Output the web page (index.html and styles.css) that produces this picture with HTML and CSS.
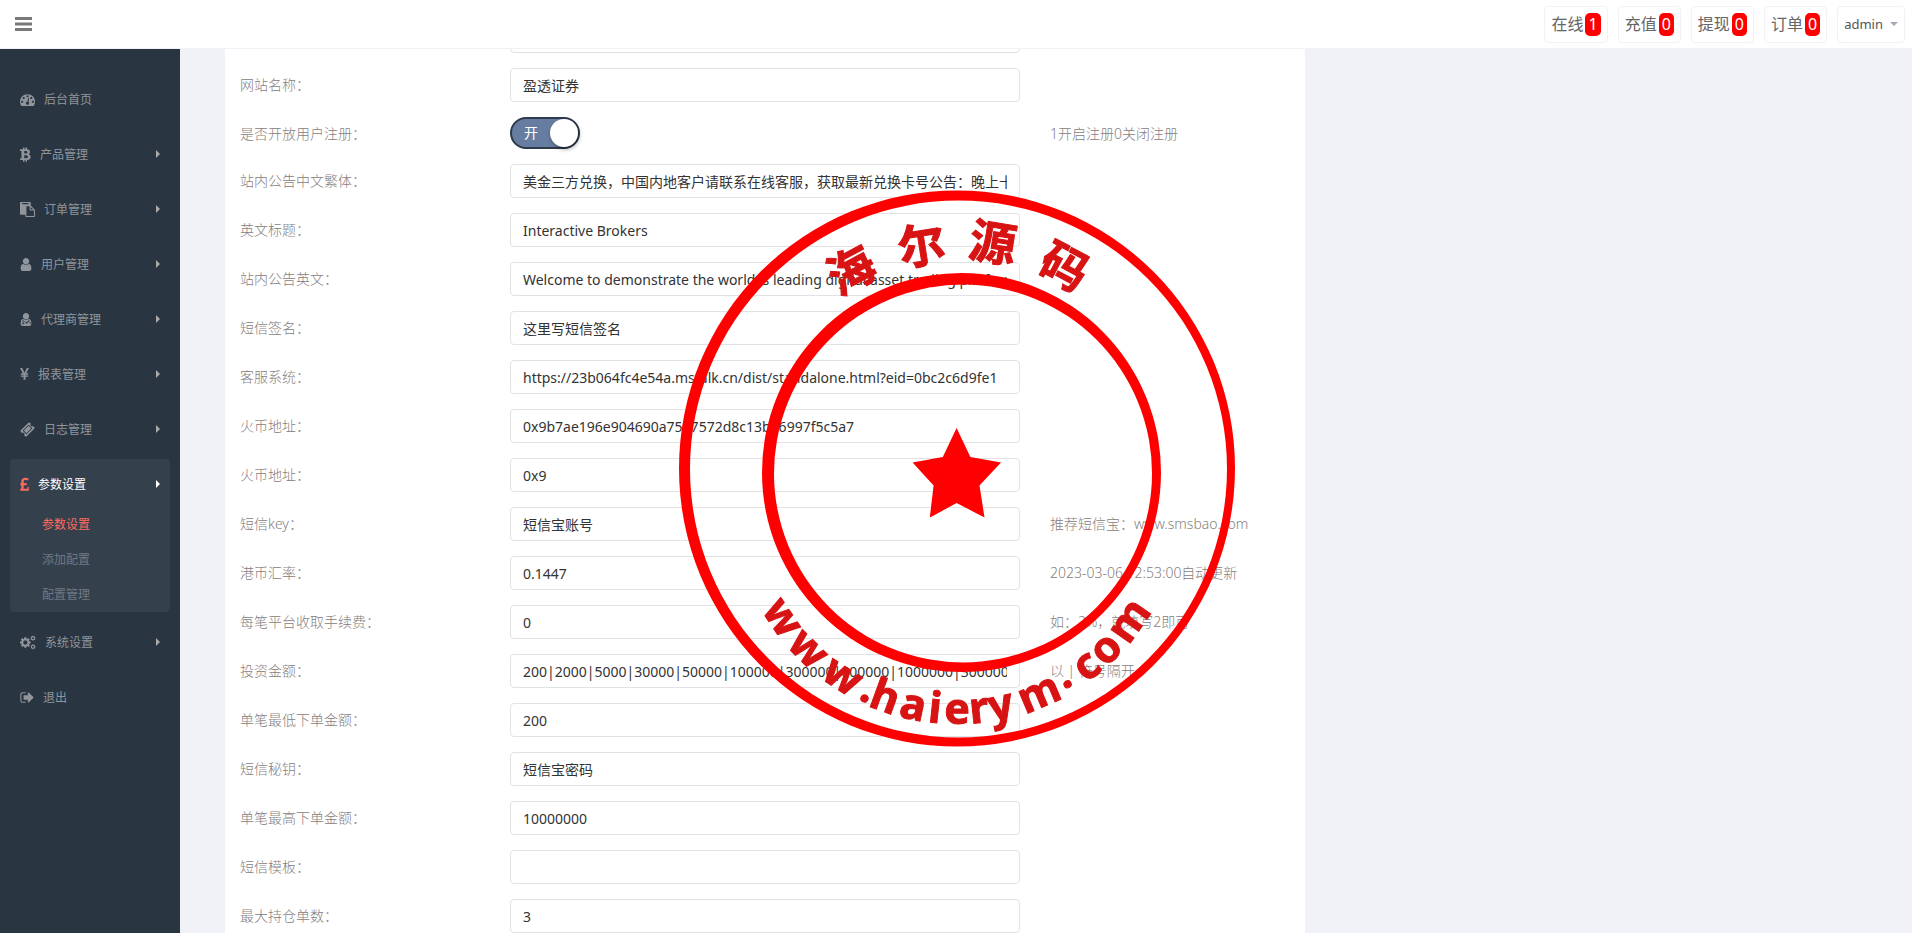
FILE: index.html
```
<!DOCTYPE html>
<html lang="zh-CN">
<head>
    <meta charset="UTF-8">
    <meta name="viewport" content="width=device-width, initial-scale=1.0">
    <title>参数设置</title>
    <link rel="stylesheet" href="styles.css">
</head>
<body>
    <header class="header">
        <button class="menu-toggle" type="button" aria-label="menu">
            <svg width="17" height="14" viewBox="0 0 17 14"><path d="M0 0h17v3H0zM0 5.500h17v3H0zM0 11h17v3H0z"/></svg>
        </button>
        <nav class="top-nav">
            <a class="top-link" href="#">在线<span class="badge">1</span></a>
            <a class="top-link" href="#">充值<span class="badge">0</span></a>
            <a class="top-link" href="#">提现<span class="badge">0</span></a>
            <a class="top-link" href="#">订单<span class="badge">0</span></a>
            <button class="top-link user" type="button">admin<span class="caret"></span></button>
        </nav>
    </header>

    <div class="wrapper">
        <aside class="sidebar">
            <ul class="menu">
                <li><a class="menu-link" href="#">
                    <svg width="15" height="15" viewBox="0 0 1792 1792"><path d="M384 1152q0-53-37.500-90.500t-90.500-37.500-90.500 37.500-37.500 90.500 37.500 90.500 90.500 37.500 90.500-37.500 37.500-90.500zm192-448q0-53-37.500-90.500t-90.500-37.500-90.500 37.500-37.500 90.500 37.500 90.500 90.500 37.500 90.500-37.500 37.500-90.500zm428 481l101-382q6-26-7.500-48.500t-38.500-29.500-48 6.500-30 39.500l-101 382q-60 5-107 43.500t-63 98.500q-20 77 20 146t117 89 146-20 89-117q16-60-6-117t-72-91zm660-33q0-53-37.500-90.500t-90.500-37.500-90.500 37.500-37.500 90.500 37.500 90.500 90.500 37.500 90.500-37.500 37.500-90.500zm-640-640q0-53-37.500-90.500t-90.500-37.500-90.500 37.500-37.500 90.500 37.500 90.500 90.500 37.500 90.500-37.500 37.500-90.500zm448 192q0-53-37.500-90.500t-90.500-37.500-90.500 37.500-37.500 90.500 37.500 90.500 90.500 37.500 90.500-37.500 37.500-90.500zm320 448q0 261-141 483-19 29-54 29h-1402q-35 0-54-29-141-221-141-483 0-182 71-348t191-286 286-191 348-71 348 71 286 191 191 286 71 348z"/></svg>
                    <span>后台首页</span>
                </a></li>
                <li><a class="menu-link has-sub" href="#">
                    <svg width="11" height="15" viewBox="0 0 11 15"><path fill-rule="evenodd" d="M0 2.200h3V.5h1.500v1.700h1V.5H7v1.800c2 .3 3 1.200 3 2.700 0 1.100-.6 1.900-1.600 2.300 1.400.4 2.200 1.300 2.200 2.700 0 1.900-1.300 2.800-3.600 3v1.700H5.500V13h-1v1.700H3V13H0l.3-1.700h1.200V4H0zM4.200 4v2.600h1.300c1.300 0 2-.4 2-1.300S6.800 4 5.500 4zM4.200 8.200v3h1.600c1.400 0 2.200-.5 2.200-1.500s-.8-1.500-2.200-1.500z"/></svg>
                    <span>产品管理</span>
                </a></li>
                <li><a class="menu-link has-sub" href="#">
                    <svg width="15" height="15" viewBox="0 0 1792 1792"><path d="M768 1664h896v-640h-416q-40 0-68-28t-28-68v-416h-384v1152zm256-1440v-64q0-13-9.500-22.500t-22.500-9.500h-704q-13 0-22.500 9.500t-9.500 22.500v64q0 13 9.500 22.500t22.500 9.500h704q13 0 22.500-9.500t9.500-22.500zm256 672h299l-299-299v299zm512 128v672q0 40-28 68t-68 28h-960q-40 0-68-28t-28-68v-160h-544q-40 0-68-28t-28-68v-1344q0-40 28-68t68-28h1088q40 0 68 28t28 68v328q21 13 36 28l408 408q28 28 48 76t20 88z"/></svg>
                    <span>订单管理</span>
                </a></li>
                <li><a class="menu-link has-sub" href="#">
                    <svg width="12" height="15" viewBox="240 0 1312 1792"><path d="M1536 1399q0 109-62.500 187t-150.500 78h-854q-88 0-150.500-78t-62.500-187q0-85 8.500-160.500t31.500-152 58.500-131 94-89 134.500-34.500q131 128 313 128t313-128q76 0 134.500 34.500t94 89 58.500 131 31.500 152 8.500 160.500zm-256-887q0 159-112.500 271.500t-271.500 112.500-271.500-112.500-112.500-271.500 112.500-271.500 271.500-112.500 271.500 112.500 112.500 271.500z"/></svg>
                    <span>用户管理</span>
                </a></li>
                <li><a class="menu-link has-sub" href="#">
                    <svg width="12" height="15" viewBox="240 0 1312 1792"><path d="M1536 1399q0 109-62.500 187t-150.500 78h-854q-88 0-150.500-78t-62.500-187q0-85 8.500-160.500t31.500-152 58.500-131 94-89 134.500-34.500q131 128 313 128t313-128q76 0 134.500 34.500t94 89 58.500 131 31.500 152 8.500 160.500zm-256-887q0 159-112.500 271.500t-271.500 112.500-271.500-112.500-112.500-271.500 112.500-271.500 271.500-112.500 271.500 112.500 112.500 271.500z"/><path class="scope" d="M560 960v330M1220 960v180M1000 1440v-120q0-150 220-180 200 30 200 180v90M720 1120l176 200 176-200"/><circle class="scope" cx="560" cy="1370" r="80"/></svg>
                    <span>代理商管理</span>
                </a></li>
                <li><a class="menu-link has-sub" href="#">
                    <svg width="9" height="15" viewBox="360 0 1075 1792"><path d="M985 1536h-172q-13 0-22-9t-10-23v-330h-288q-13 0-22-9t-10-23v-103q0-13 10-22t22-10h288v-85h-288q-13 0-22-9t-10-23v-104q0-13 10-22t22-10h214l-321-578q-8-16 0-32 10-16 28-16h194q19 0 29 18l215 425q19 38 56 125 10-24 30-68t28-61l191-420q8-19 29-19h191q17 0 27 16 9 14 1 31l-313 579h215q13 0 22 10t10 22v104q0 14-10 23t-22 9h-290v85h290q13 0 22 10t10 22v103q0 14-10 23t-22 9h-290v330q0 13-10 22t-22 10z"/></svg>
                    <span>报表管理</span>
                </a></li>
                <li><a class="menu-link has-sub" href="#">
                    <svg width="15" height="15" viewBox="0 0 1792 1792"><path d="M1024 452l316 316-572 572-316-316zm-211 979l618-618q19-19 19-45t-19-45l-362-362q-18-18-45-18t-45 18l-618 618q-19 19-19 45t19 45l362 362q18 18 45 18t45-18zm889-637l-907 908q-37 37-90.500 37t-90.500-37l-126-126q56-56 56-136t-56-136-136-56-136 56l-125-126q-37-37-37-90.500t37-90.500l907-906q37-37 90.500-37t90.500 37l125 125q-56 56-56 136t56 136 136 56 136-56l126 125q37 37 37 90.500t-37 90.500z"/></svg>
                    <span>日志管理</span>
                </a></li>
                <li class="active">
                    <a class="menu-link has-sub" href="#">
                        <svg width="9" height="15" viewBox="430 60 965 1608"><path d="M1371 1118v382q0 14-9 23t-23 9h-851q-13 0-22-9t-10-23v-150q0-13 10-22t22-10h83v-381h-81q-14 0-23-9t-9-23v-131q0-14 9-23t23-9h81v-222q0-171 123-282t315-111q185 0 335 125 9 8 10 20t-7 23l-103 127q-9 11-22 12-13 2-23-7-5-5-26-19t-69-32-93-18q-85 0-137 47t-52 123v215h305q13 0 22 9t10 23v131q0 13-10 22t-22 10h-305v379h414v-181q0-13 9-22t23-10h162q14 0 23 10t9 22z"/></svg>
                        <span>参数设置</span>
                    </a>
                    <ul class="sub-menu">
                        <li><a class="current" href="#">参数设置</a></li>
                        <li><a href="#">添加配置</a></li>
                        <li><a href="#">配置管理</a></li>
                    </ul>
                </li>
                <li><a class="menu-link has-sub" href="#">
                    <svg width="16" height="15" viewBox="0 0 1912 1792"><path d="M896 896q0-106-75-181t-181-75-181 75-75 181 75 181 181 75 181-75 75-181zm384-91v185q0 10-7 19t-16 11l-155 24q-11 35-32 76 34 48 90 115 7 11 7 20 0 12-7 19-23 30-82 89t-79 60q-11 0-21-7l-115-90q-37 19-77 31-11 108-23 155-7 24-30 24h-186q-11 0-20-7t-10-18l-23-153q-34-10-75-31l-118 89q-7 7-20 7-11 0-21-8-144-133-144-160 0-9 7-19 10-14 41-53t47-61q-23-44-35-82l-152-24q-10-1-17-9t-7-20v-185q0-10 7-19t16-11l155-24q11-35 32-76-34-48-90-115-7-11-7-20 0-12 7-20 22-30 82-89t79-59q11 0 21 7l115 90q34-18 77-32 11-108 23-154 7-24 30-24h186q11 0 20 7t10 18l23 153q34 10 75 31l118-89q8-7 20-7 11 0 21 8 144 133 144 160 0 8-7 19-12 16-42 54t-45 60q23 48 34 82l152 23q10 2 17 10t7 20z"/><g class="small-cog"><circle cx="1560" cy="384" r="190"/><circle cx="1560" cy="1408" r="190"/><path d="M1560 80v110M1560 578v110M1300 234l94 54M1726 480l94 54M1300 534l94-54M1726 288l94-54M1560 1104v110M1560 1602v110M1300 1258l94 54M1726 1504l94 54M1300 1558l94-54M1726 1312l94-54"/></g></svg>
                    <span>系统设置</span>
                </a></li>
                <li><a class="menu-link" href="#">
                    <svg width="14" height="15" viewBox="30 0 1660 1792"><path d="M704 1440q0 4 1 20t0 26-3 24-10 19-20 7h-320q-119 0-203-85t-85-203v-704q0-119 85-203t203-85h320q13 0 22 10t10 22q0 4 1 20t0 26-3 24-10 19-20 7h-320q-66 0-113 47t-47 113v704q0 66 47 113t113 47h312l12 1 11 3 8 5 7 9 2 14zm928-544q0 26-19 45l-544 544q-19 19-45 19t-45-19-19-45v-288h-448q-26 0-45-19t-19-45v-384q0-26 19-45t45-19h448v-288q0-26 19-45t45-19 45 19l544 544q19 19 19 45z"/></svg>
                    <span>退出</span>
                </a></li>
            </ul>
        </aside>

        <main class="content">
            <form class="panel">
                <div class="form-row">
                    <label for="logo"></label>
                    <div class="field"><input class="text" id="logo" type="text"></div>
                </div>
                <div class="form-row">
                    <label for="site-name">网站名称：</label>
                    <div class="field"><input class="text" id="site-name" type="text" value="盈透证券"></div>
                </div>
                <div class="form-row">
                    <label for="reg-open">是否开放用户注册：</label>
                    <div class="field">
                        <label class="switch">
                            <input id="reg-open" type="checkbox" checked>
                            <span class="switch-text">开</span>
                        </label>
                    </div>
                    <p class="help">1开启注册0关闭注册</p>
                </div>
                <div class="form-row">
                    <label for="notice-zh">站内公告中文繁体：</label>
                    <div class="field"><input class="text" id="notice-zh" type="text" value="美金三方兑换，中国内地客户请联系在线客服，获取最新兑换卡号公告：晚上十点"></div>
                </div>
                <div class="form-row">
                    <label for="title-en">英文标题：</label>
                    <div class="field"><input class="text" id="title-en" type="text" value="Interactive Brokers"></div>
                </div>
                <div class="form-row">
                    <label for="notice-en">站内公告英文：</label>
                    <div class="field"><input class="text" id="notice-en" type="text" value="Welcome to demonstrate the world is leading digital asset trading platform"></div>
                </div>
                <div class="form-row">
                    <label for="sms-sign">短信签名：</label>
                    <div class="field"><input class="text" id="sms-sign" type="text" value="这里写短信签名"></div>
                </div>
                <div class="form-row">
                    <label for="service">客服系统：</label>
                    <div class="field"><input class="text" id="service" type="text" value="https://23b064fc4e54a.mstalk.cn/dist/standalone.html?eid=0bc2c6d9fe1"></div>
                </div>
                <div class="form-row">
                    <label for="huobi-1">火币地址：</label>
                    <div class="field"><input class="text" id="huobi-1" type="text" value="0x9b7ae196e904690a7507572d8c13b46997f5c5a7"></div>
                </div>
                <div class="form-row">
                    <label for="huobi-2">火币地址：</label>
                    <div class="field"><input class="text" id="huobi-2" type="text" value="0x9"></div>
                </div>
                <div class="form-row">
                    <label for="sms-key">短信key：</label>
                    <div class="field"><input class="text" id="sms-key" type="text" value="短信宝账号"></div>
                    <p class="help">推荐短信宝：www.smsbao.com</p>
                </div>
                <div class="form-row">
                    <label for="hk-rate">港币汇率：</label>
                    <div class="field"><input class="text" id="hk-rate" type="text" value="0.1447"></div>
                    <p class="help">2023-03-06 12:53:00自动更新</p>
                </div>
                <div class="form-row">
                    <label for="fee">每笔平台收取手续费：</label>
                    <div class="field"><input class="text" id="fee" type="text" value="0"></div>
                    <p class="help">如：2%，就填写2即可</p>
                </div>
                <div class="form-row">
                    <label for="amounts">投资金额：</label>
                    <div class="field"><input class="text" id="amounts" type="text" value="200|2000|5000|30000|50000|100000|300000|600000|1000000|3000000|5000000"></div>
                    <p class="help">以 | 符号隔开</p>
                </div>
                <div class="form-row">
                    <label for="min-order">单笔最低下单金额：</label>
                    <div class="field"><input class="text" id="min-order" type="text" value="200"></div>
                </div>
                <div class="form-row">
                    <label for="sms-secret">短信秘钥：</label>
                    <div class="field"><input class="text" id="sms-secret" type="text" value="短信宝密码"></div>
                </div>
                <div class="form-row">
                    <label for="max-order">单笔最高下单金额：</label>
                    <div class="field"><input class="text" id="max-order" type="text" value="10000000"></div>
                </div>
                <div class="form-row">
                    <label for="sms-tpl">短信模板：</label>
                    <div class="field"><input class="text" id="sms-tpl" type="text"></div>
                </div>
                <div class="form-row">
                    <label for="max-hold">最大持仓单数：</label>
                    <div class="field"><input class="text" id="max-hold" type="text" value="3"></div>
                </div>
            </form>
        </main>
    </div>

    <svg class="seal" width="560" height="561" viewBox="0 0 560 561">
        <!-- rings -->
        <path fill-rule="evenodd" d="M3 282.500a278 278 0 1 0 556 0a278 278 0 1 0-556 0zM14 283a268.500 268.500 0 1 0 537 0a268.500 268.500 0 1 0-537 0z"/>
        <path fill-rule="evenodd" d="M86 286.500a199.500 199.500 0 1 0 399 0a199.500 199.500 0 1 0-399 0zM98 287.500a189 189 0 1 0 378 0a189 189 0 1 0-378 0z"/>
        <path d="M280.600 242L294.400 271L325 276.500L303.500 299.500L308.500 331.500L280.600 317L253.800 331.500L257.600 299.500L236.600 276.500L266.800 271z"/>
        <g class="seal-text seal-name">
            <text x="281" y="75" transform="rotate(-28 281 283)">海</text>
            <text x="281" y="74" transform="rotate(-9 281 283)">尔</text>
            <text x="281" y="71" transform="rotate(9 281 283)">源</text>
            <text x="281" y="71" transform="rotate(28 281 283)">码</text>
        </g>
        <g class="seal-text">
            <text x="281" y="538" transform="rotate(56 281 314)">w</text>
            <text x="281" y="538" transform="rotate(45 281 314)">w</text>
            <text x="281" y="538" transform="rotate(33 281 314)">w</text>
            <text x="281" y="536" transform="rotate(25 281 314)">.</text>
            <text x="281" y="538" transform="rotate(20 281 314)">h</text>
            <text x="281" y="538" transform="rotate(12 281 314)">a</text>
            <text x="281" y="538" transform="rotate(6 281 314)">i</text>
            <text x="281" y="538" transform="rotate(0 281 314)">e</text>
            <text x="281" y="538" transform="rotate(-6 281 314)">r</text>
            <text x="281" y="538" transform="rotate(-12 281 314)">y</text>
            <text x="281" y="538" transform="rotate(-23 281 314)">m</text>
            <text x="281" y="532" transform="rotate(-31 281 314)">.</text>
            <text x="281" y="538" transform="rotate(-38 281 314)">c</text>
            <text x="281" y="538" transform="rotate(-45 281 314)">o</text>
            <text x="281" y="538" transform="rotate(-55 281 314)">m</text>
        </g>
    </svg>
</body>
</html>
```
FILE: styles.css
```
* {
    box-sizing: border-box;
}

body {
    margin: 0;
    height: 100vh;
    overflow: hidden;
    background-color: #f1f2f7;
    font-family: "Noto Sans", "Noto Sans CJK SC", sans-serif;
    font-size: 14px;
    color: #797979;
}

ul {
    list-style: none;
    margin: 0;
    padding: 0;
}

a {
    text-decoration: none;
    color: inherit;
}

/* top bar */
.header {
    position: fixed;
    top: 0;
    left: 0;
    right: 0;
    z-index: 10;
    display: flex;
    justify-content: space-between;
    align-items: center;
    height: 49px;
    padding: 0 7px 0 15px;
    background-color: #fff;
    border-bottom: 1px solid #f1f2f7;
}

.menu-toggle {
    display: flex;
    padding: 0;
    border: none;
    background: none;
    cursor: pointer;
}

.menu-toggle svg {
    fill: #797979;
}

.top-nav {
    display: flex;
    gap: 10px;
}

.top-link {
    display: flex;
    align-items: center;
    gap: 2px;
    height: 37px;
    padding: 0 6px;
    border: 1px solid #f1f2f7;
    border-radius: 4px;
    background-color: #fff;
    font-family: inherit;
    font-size: 16px;
    line-height: 23px;
    color: #666;
}

.user {
    gap: 7px;
    font-size: 13px;
    color: #555;
    cursor: pointer;
}

.badge {
    padding: 0 3px;
    border-radius: 5px;
    background-color: #f00;
    color: #fff;
}

.caret {
    border: 4px solid transparent;
    border-top-color: #a4aaba;
    border-bottom: none;
}

/* sidebar */
.wrapper {
    display: flex;
    height: 100%;
}

.sidebar {
    flex: 0 0 180px;
    padding: 74px 10px 0;
    background-color: #2a3542;
}

.menu > li {
    margin-bottom: 5px;
    border-radius: 4px;
}

.menu-link {
    display: flex;
    align-items: center;
    gap: 9px;
    height: 50px;
    padding: 0 10px;
    font-size: 12px;
    color: #8f959b;
}

.menu-link svg {
    fill: currentColor;
}

.menu-link .scope {
    fill: none;
    stroke: #2a3542;
    stroke-width: 90;
}

.menu-link .small-cog {
    fill: none;
    stroke: currentColor;
    stroke-width: 130;
}

.has-sub::after {
    content: "";
    margin-left: auto;
    border: 4px solid transparent;
    border-left-color: #aaa;
    border-right: none;
}

.active {
    background-color: #35404d;
}

.active .menu-link {
    color: #fff;
}

.active .menu-link svg {
    fill: #ff6c60;
}

.active .has-sub::after {
    border-left-color: #fff;
}

.sub-menu {
    margin-top: -2px;
}

.sub-menu a {
    display: block;
    padding-left: 32px;
    font-size: 12px;
    line-height: 35px;
    color: #6f7982;
}

.sub-menu .current {
    color: #ff6c60;
}

/* settings form */
.content {
    flex: 1;
    padding: 0 67px 0 45px;
}

.panel {
    width: calc(100% * 2 / 3);
    min-width: 900px;
    min-height: 100%;
    padding-top: 19px;
    background-color: #fff;
}

.form-row {
    display: flex;
    margin-bottom: 15px;
}

.form-row > label,
.help {
    flex: 0 0 25%;
    margin: 0;
    padding: 0 15px;
    font-weight: 300;
    line-height: 34px;
    color: #868080;
    white-space: nowrap;
}

.form-row > label,
.help,
.switch {
    height: 32px;
}

.field {
    flex: 0 0 50%;
    padding: 0 15px;
}

.text {
    display: block;
    width: 100%;
    height: 34px;
    padding: 6px 12px;
    border: 1px solid #e2e2e4;
    border-radius: 4px;
    background-color: #fff;
    font-family: inherit;
    font-size: 14px;
    color: #333;
}

.switch {
    position: relative;
    display: block;
    width: 70px;
    cursor: pointer;
}

.switch input {
    appearance: none;
    display: block;
    width: 70px;
    height: 32px;
    margin: 0;
    border: 2px solid #2f3b4a;
    border-radius: 16px;
    background: #667da1;
}

.switch input::after {
    content: "";
    display: block;
    width: 28px;
    height: 28px;
    margin-left: auto;
    border-radius: 50%;
    background-color: #fff;
    box-shadow: 1px 2px 4px rgba(0, 0, 0, 0.4);
}

.switch-text {
    position: absolute;
    top: 0;
    left: 14px;
    line-height: 32px;
    color: #fff;
}

/* round stamp in the middle of the window */
.seal {
    position: fixed;
    inset: 0;
    z-index: 20;
    margin: auto;
    fill: #f00;
    pointer-events: none;
}

.seal-text {
    fill: #d81313;
    stroke: #d81313;
    stroke-width: 1;
    font-size: 43px;
    font-weight: bold;
    text-anchor: middle;
}

.seal-name {
    font-size: 47px;
}
```
